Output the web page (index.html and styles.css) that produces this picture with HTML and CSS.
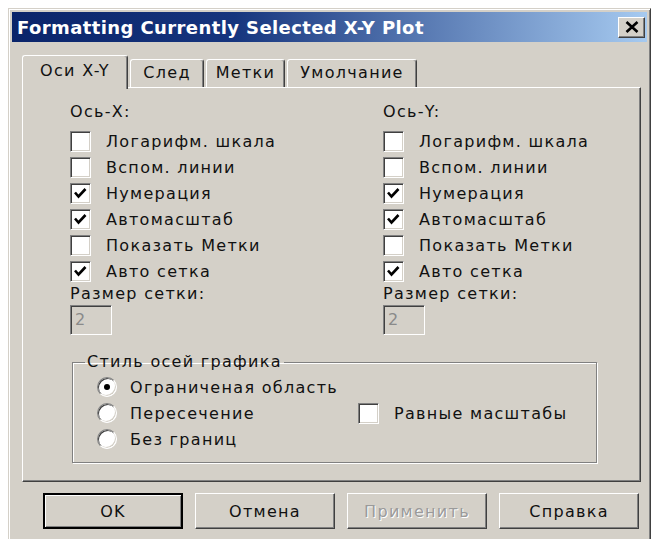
FILE: index.html
```html
<!DOCTYPE html>
<html lang="ru">
<head>
<meta charset="utf-8">
<title>Formatting Currently Selected X-Y Plot</title>
<link rel="stylesheet" href="styles.css">
</head>
<body>
<div class="dialog">
  <div class="titlebar">
    <span class="title">Formatting Currently Selected X-Y Plot</span>
    <button class="close" type="button" aria-label="Закрыть">
      <svg width="14" height="12" viewBox="0 0 14 12"><path d="M1.5 1 L12.5 11 M12.5 1 L1.5 11" stroke="#000" stroke-width="2.6" fill="none"/></svg>
    </button>
  </div>

  <div class="tabs">
    <div class="tab tab-axes active">Оси X-Y</div>
    <div class="tab tab-trace">След</div>
    <div class="tab tab-marks">Метки</div>
    <div class="tab tab-default">Умолчание</div>
  </div>

  <div class="panel">
    <div class="axes">
      <div class="axis">
        <div class="caption">Ось-X:</div>
        <label class="opt"><span class="box"></span>Логарифм. шкала</label>
        <label class="opt"><span class="box"></span>Вспом. линии</label>
        <label class="opt"><span class="box checked"><svg width="19" height="19" viewBox="0 0 19 19"><path d="M4 8.5 L7.5 12.5 L14.5 5" stroke="#000" stroke-width="2.6" fill="none"/></svg></span>Нумерация</label>
        <label class="opt"><span class="box checked"><svg width="19" height="19" viewBox="0 0 19 19"><path d="M4 8.5 L7.5 12.5 L14.5 5" stroke="#000" stroke-width="2.6" fill="none"/></svg></span>Автомасштаб</label>
        <label class="opt"><span class="box"></span>Показать Метки</label>
        <label class="opt"><span class="box checked"><svg width="19" height="19" viewBox="0 0 19 19"><path d="M4 8.5 L7.5 12.5 L14.5 5" stroke="#000" stroke-width="2.6" fill="none"/></svg></span>Авто сетка</label>
        <div class="caption">Размер сетки:</div>
        <div class="field">2</div>
      </div>
      <div class="axis">
        <div class="caption">Ось-Y:</div>
        <label class="opt"><span class="box"></span>Логарифм. шкала</label>
        <label class="opt"><span class="box"></span>Вспом. линии</label>
        <label class="opt"><span class="box checked"><svg width="19" height="19" viewBox="0 0 19 19"><path d="M4 8.5 L7.5 12.5 L14.5 5" stroke="#000" stroke-width="2.6" fill="none"/></svg></span>Нумерация</label>
        <label class="opt"><span class="box checked"><svg width="19" height="19" viewBox="0 0 19 19"><path d="M4 8.5 L7.5 12.5 L14.5 5" stroke="#000" stroke-width="2.6" fill="none"/></svg></span>Автомасштаб</label>
        <label class="opt"><span class="box"></span>Показать Метки</label>
        <label class="opt"><span class="box checked"><svg width="19" height="19" viewBox="0 0 19 19"><path d="M4 8.5 L7.5 12.5 L14.5 5" stroke="#000" stroke-width="2.6" fill="none"/></svg></span>Авто сетка</label>
        <div class="caption">Размер сетки:</div>
        <div class="field">2</div>
      </div>
    </div>

    <fieldset class="group">
      <legend>Стиль осей графика</legend>
      <label class="opt wide"><span class="radio on"></span>Ограниченая область</label>
      <label class="opt"><span class="radio"></span>Пересечение</label>
      <label class="opt"><span class="box"></span>Равные масштабы</label>
      <label class="opt"><span class="radio"></span>Без границ</label>
    </fieldset>
  </div>

  <div class="buttons">
    <button class="btn default" type="button">OK</button>
    <button class="btn" type="button">Отмена</button>
    <button class="btn disabled" type="button">Применить</button>
    <button class="btn" type="button">Справка</button>
  </div>
</div>
</body>
</html>
```

FILE: styles.css
```css
html {
  overflow: hidden;
}

body {
  margin: 0;
  background: #fff;
  font-family: "DejaVu Sans", "Liberation Sans", sans-serif;
  font-size: 16px;
  letter-spacing: 1.3px;
  color: #111;
}

/* window frame, classic 3D look */
.dialog {
  margin: 8px 0 0 8px;
  width: 643px;
  height: 540px;
  box-sizing: border-box;
  padding: 3px;
  background: #d4d0c8;
  border: 1px solid;
  border-color: #d4d0c8 #404040 #404040 #d4d0c8;
  box-shadow: inset 1px 1px #fff, inset -1px -1px #808080;
}

.titlebar {
  height: 30px;
  display: flex;
  align-items: center;
  padding: 0 2px 0 5px;
  background: linear-gradient(to right, #0a246a 0%, #16357e 35%, #a6caf0 100%);
  color: #fff;
  font-size: 18px;
  font-weight: bold;
  letter-spacing: 0.4px;
}

.close {
  margin-left: auto;
  width: 27px;
  height: 21px;
  padding: 0;
  display: flex;
  align-items: center;
  justify-content: center;
  background: #d4d0c8;
  border: 1px solid;
  border-color: #fff #404040 #404040 #fff;
  box-shadow: inset -1px -1px #808080;
}

/* tab strip */
.tabs {
  display: flex;
  align-items: flex-end;
  height: 32px;
  margin: 13px 0 0 10px;
  position: relative;
  z-index: 1;
}

.tab {
  height: 28px;
  box-sizing: border-box;
  margin-right: 2px;
  text-align: center;
  line-height: 26px;
  border: 1px solid;
  border-bottom: none;
  border-color: #fff #404040 #fff #fff;
  border-radius: 3px 3px 0 0;
  box-shadow: inset -1px 0 #808080;
  background: #d4d0c8;
}

.tab.active {
  height: 34px;
  margin-bottom: -2px;
  line-height: 30px;
}

.tab-axes { width: 106px; }
.tab-trace { width: 74px; }
.tab-marks { width: 79px; }
.tab-default { width: 130px; }

.panel {
  height: 395px;
  box-sizing: border-box;
  margin: 0 6px 0 10px;
  padding: 14px 0 0 47px;
  border: 1px solid;
  border-color: #fff #404040 #404040 #fff;
  box-shadow: inset -1px -1px #808080;
}

.axes {
  display: grid;
  grid-template-columns: 313px auto;
}

.caption {
  line-height: 20px;
}

.axis > .caption:first-child {
  margin-bottom: 6px;
}

.opt {
  display: flex;
  align-items: center;
  height: 26px;
}

/* sunken check box */
.box {
  width: 21px;
  height: 21px;
  box-sizing: border-box;
  margin-right: 15px;
  flex: none;
  display: flex;
  align-items: center;
  justify-content: center;
  background: #fff;
  border: 1px solid;
  border-color: #808080 #fff #fff #808080;
  box-shadow: inset 1px 1px #404040, inset -1px -1px #d4d0c8;
}

/* disabled edit field */
.field {
  width: 42px;
  height: 30px;
  box-sizing: border-box;
  margin-top: 1px;
  padding-left: 4px;
  line-height: 28px;
  color: #8a8a8a;
  border: 1px solid;
  border-color: #808080 #fff #fff #808080;
  box-shadow: inset 1px 1px #404040, inset -1px -1px #d4d0c8;
}

/* etched group box */
.group {
  width: 525px;
  box-sizing: border-box;
  margin: 17px 0 0 2px;
  padding: 2px 0 10px 24px;
  border: 1px solid #808080;
  box-shadow: inset 1px 1px #fff, 1px 1px #fff;
  display: grid;
  grid-template-columns: 261px auto;
}

.group legend {
  margin-left: -12px;
  padding: 0 2px;
  line-height: 20px;
}

.opt.wide {
  grid-column: 1 / -1;
}

.radio {
  width: 20px;
  height: 20px;
  box-sizing: border-box;
  margin-right: 13px;
  flex: none;
  position: relative;
  border-radius: 50%;
  background: #fff;
  border: 1px solid;
  border-color: #808080 #fff #fff #808080;
  box-shadow: inset 1px 1px #404040, inset -1px -1px #d4d0c8;
}

.radio.on::after {
  content: "";
  position: absolute;
  left: 6px;
  top: 6px;
  width: 6px;
  height: 6px;
  border-radius: 50%;
  background: #000;
}

/* push buttons */
.buttons {
  display: flex;
  gap: 12px;
  margin: 11px 0 0 31px;
}

.btn {
  width: 140px;
  height: 36px;
  box-sizing: border-box;
  padding: 0;
  font: inherit;
  letter-spacing: 1.3px;
  color: #111;
  background: #d4d0c8;
  border: 1px solid;
  border-color: #fff #404040 #404040 #fff;
  box-shadow: inset -1px -1px #808080, inset 1px 1px #d4d0c8;
}

.btn.default {
  border: 2px solid #000;
  box-shadow: inset 1px 1px #fff, inset -1px -1px #808080;
}

.btn.disabled {
  color: #9a9a9a;
  text-shadow: 1px 1px #fff;
}
```
